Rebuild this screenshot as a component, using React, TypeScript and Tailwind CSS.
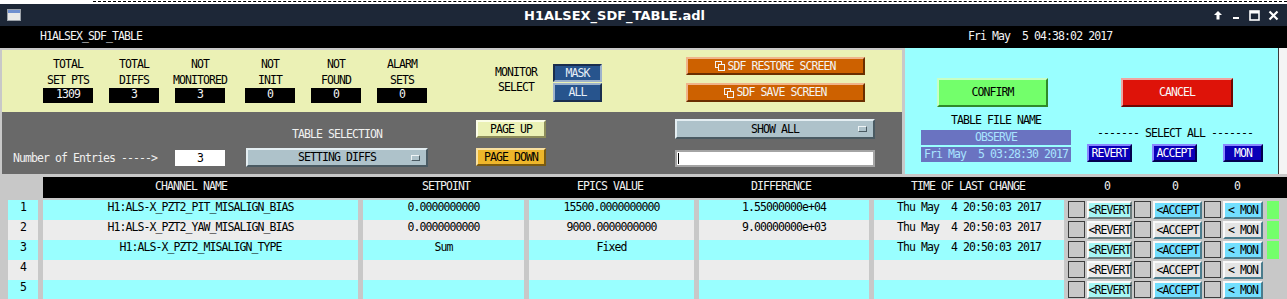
import React from 'react';

const rows = [
  { n: 1, ch: 'H1:ALS-X_PZT2_PIT_MISALIGN_BIAS', sp: '0.0000000000', ep: '15500.0000000000', df: '1.55000000e+04', t: 'Thu May  4 20:50:03 2017', on: true },
  { n: 2, ch: 'H1:ALS-X_PZT2_YAW_MISALIGN_BIAS', sp: '0.0000000000', ep: '9000.0000000000', df: '9.00000000e+03', t: 'Thu May  4 20:50:03 2017', on: true },
  { n: 3, ch: 'H1:ALS-X_PZT2_MISALIGN_TYPE', sp: 'Sum', ep: 'Fixed', df: '', t: 'Thu May  4 20:50:03 2017', on: true },
  { n: 4, ch: '', sp: '', ep: '', df: '', t: '', on: false },
  { n: 5, ch: '', sp: '', ep: '', df: '', t: '', on: false },
];

const stats = [
  { a: 'TOTAL', b: 'SET PTS', v: '1309' },
  { a: 'TOTAL', b: 'DIFFS', v: '3' },
  { a: 'NOT', b: 'MONITORED', v: '3' },
  { a: 'NOT', b: 'INIT', v: '0' },
  { a: 'NOT', b: 'FOUND', v: '0' },
  { a: 'ALARM', b: 'SETS', v: '0' },
];

// related-display glyph used on the SDF buttons
const RelIcon = () => (
  <svg width="11" height="10" viewBox="0 0 11 10" className="mr-[1px]">
    <rect x="0.5" y="0.5" width="6" height="6" fill="none" stroke="#f4f4f4" />
    <rect x="3.5" y="3.5" width="6" height="6" fill="#cd6100" stroke="#f4f4f4" />
  </svg>
);

const MenuMark = () => (
  <div className="absolute right-[6px] top-1/2 -translate-y-1/2 w-[9px] h-[6px] bg-[#aec2ca] border border-t-[#eef4f6] border-l-[#eef4f6] border-b-[#4a5a62] border-r-[#4a5a62]" />
);

export default function App() {
  return (
    <div className="w-[1287px] h-[299px] overflow-hidden bg-[#c8c8c8] font-['DejaVu_Sans_Mono',monospace] text-[11.5px] tracking-[-0.92px] leading-[13px] text-black">
      {/* desktop strip */}
      <div className="h-[4px] bg-white">
        <div className="ml-[93px] pt-[1px]">
          <div className="border-t border-dashed border-black" />
        </div>
      </div>

      {/* title bar */}
      <div className="h-[22px] bg-[#1d2737] flex items-center">
        <div className="ml-[7px] w-[14px] h-[12px] border border-[#9aa0a8] bg-[#e8e8e8] flex flex-col">
          <div className="h-[3px] bg-[#6f8fcf]" />
        </div>
        <div className="ml-[503px] font-['DejaVu_Sans',sans-serif] font-bold text-[13px] tracking-normal text-white">H1ALSEX_SDF_TABLE.adl</div>
        <div className="ml-auto mr-[8px] flex items-center gap-[8px]">
          <svg width="10" height="10" viewBox="0 0 10 10">
            <path d="M5 1 L1 5 H3.5 V9.5 H6.5 V5 H9 Z" fill="#fff" />
          </svg>
          <svg width="10" height="10" viewBox="0 0 10 10">
            <rect x="2" y="7" width="6" height="2" fill="#fff" />
          </svg>
          <svg width="11" height="11" viewBox="0 0 11 11">
            <rect x="1" y="1" width="9" height="9" fill="none" stroke="#fff" strokeWidth="1.6" />
            <rect x="1" y="1" width="9" height="2.5" fill="#fff" />
          </svg>
          <svg width="11" height="11" viewBox="0 0 11 11">
            <path d="M1.5 1.5 L9.5 9.5 M9.5 1.5 L1.5 9.5" stroke="#fff" strokeWidth="2.2" />
          </svg>
        </div>
      </div>

      {/* black header bar */}
      <div className="h-[22px] bg-black text-[#f4f4f4] flex items-start pt-[4px] whitespace-pre">
        <span className="ml-[40px]">H1ALSEX_SDF_TABLE</span>
        <span className="ml-[826px]">Fri May  5 04:38:02 2017</span>
      </div>

      {/* upper body */}
      <div className="flex h-[126px]">
        <div className="w-[905px] pt-[2px] pl-[2px] flex flex-col">
          {/* yellow summary panel */}
          <div className="w-[900px] h-[62px] bg-[#ebf1b5] flex items-start">
            <div className="flex ml-[41px] mt-[6px]">
              {stats.map((s, i) => (
                <div key={i} className={`w-[50px] flex flex-col items-center ${i === 0 ? '' : i === 3 ? 'ml-[20px]' : 'ml-[16px]'}`}>
                  <div className="leading-[16px] whitespace-nowrap">{s.a}</div>
                  <div className="leading-[16px] whitespace-nowrap">{s.b}</div>
                  <div className="w-[50px] h-[15px] bg-black text-[#f4f4f4] text-center">{s.v}</div>
                </div>
              ))}
            </div>
            <div className="ml-[59px] mt-[15px] w-[60px] flex flex-col items-center leading-[15px]">
              <div>MONITOR</div>
              <div>SELECT</div>
            </div>
            <div className="ml-[7px] mt-[14px] flex flex-col gap-[1px] text-[#e6eef6]">
              <div className="w-[49px] h-[18px] bg-[#27548d] border-2 border-t-[#1a2e4e] border-l-[#1a2e4e] border-b-[#9db2cc] border-r-[#9db2cc] flex items-center justify-center">MASK</div>
              <div className="w-[49px] h-[19px] bg-[#27548d] border-2 border-t-[#9db2cc] border-l-[#9db2cc] border-b-[#1a2e4e] border-r-[#1a2e4e] flex items-center justify-center">ALL</div>
            </div>
            <div className="ml-[84px] mt-[7px] flex flex-col gap-[8px] text-[#f4f4f4]">
              <div className="w-[179px] h-[18px] bg-[#cd6100] border-2 border-t-[#f0b48a] border-l-[#f0b48a] border-b-[#6a2e00] border-r-[#6a2e00] flex items-center justify-center">
                <RelIcon />SDF RESTORE SCREEN
              </div>
              <div className="w-[179px] h-[19px] bg-[#cd6100] border-2 border-t-[#f0b48a] border-l-[#f0b48a] border-b-[#6a2e00] border-r-[#6a2e00] flex items-center justify-center">
                <RelIcon />SDF SAVE SCREEN
              </div>
            </div>
          </div>

          {/* gray controls panel */}
          <div className="w-[900px] h-[62px] bg-[#696969] flex items-start">
            <div className="ml-[11px] mt-[38px] h-[16px] flex items-center text-[#f0f0f0]">
              <span>Number of Entries -----&gt;</span>
              <div className="ml-[18px] w-[50px] h-[16px] bg-white text-black flex items-center justify-center">3</div>
            </div>
            <div className="ml-[21px] mt-[15px] w-[182px] flex flex-col">
              <div className="text-center text-[#f0f0f0] leading-[14px]">TABLE SELECTION</div>
              <div className="relative mt-[7px] h-[19px] bg-[#aec2ca] border-2 border-t-[#e4eef2] border-l-[#e4eef2] border-b-[#4a5a62] border-r-[#4a5a62] flex items-center justify-center">
                SETTING DIFFS
                <MenuMark />
              </div>
            </div>
            <div className="ml-[48px] mt-[8px] flex flex-col gap-[10px]">
              <div className="w-[70px] h-[18px] bg-[#ebf1b5] border-2 border-t-[#fbfde8] border-l-[#fbfde8] border-b-[#8c8c5a] border-r-[#8c8c5a] flex items-center justify-center">PAGE UP</div>
              <div className="w-[70px] h-[18px] bg-[#eeb62b] border-2 border-t-[#f8e0a0] border-l-[#f8e0a0] border-b-[#7a5a10] border-r-[#7a5a10] flex items-center justify-center">PAGE DOWN</div>
            </div>
            <div className="ml-[129px] mt-[7px] flex flex-col gap-[11px]">
              <div className="relative w-[200px] h-[20px] bg-[#aec2ca] border-2 border-t-[#e4eef2] border-l-[#e4eef2] border-b-[#4a5a62] border-r-[#4a5a62] flex items-center justify-center">
                SHOW ALL
                <MenuMark />
              </div>
              <div className="w-[200px] h-[17px] bg-white border-2 border-[#a4a4a4] flex items-center">
                <div className="ml-[1px] w-[1px] h-[11px] bg-black" />
              </div>
            </div>
          </div>
        </div>

        {/* cyan confirm panel */}
        <div className="w-[373px] bg-[#99ffff] flex flex-col">
          <div className="mt-[30px] flex">
            <div className="ml-[32px] w-[111px] h-[29px] bg-[#73ff6b] border-2 border-t-[#c8ffc4] border-l-[#c8ffc4] border-b-[#2f8a2a] border-r-[#2f8a2a] flex items-center justify-center">CONFIRM</div>
            <div className="ml-[73px] w-[112px] h-[29px] bg-[#de1309] text-[#f8f8f8] border-2 border-t-[#f0a4a0] border-l-[#f0a4a0] border-b-[#6e0602] border-r-[#6e0602] flex items-center justify-center">CANCEL</div>
          </div>
          <div className="flex">
            <div className="ml-[16px] w-[150px] flex flex-col">
              <div className="mt-[6px] leading-[14px] text-center">TABLE FILE NAME</div>
              <div className="mt-[3px] h-[15px] bg-[#6a73c1] text-[#a8e4ff] text-center leading-[15px]">OBSERVE</div>
              <div className="mt-[2px] h-[15px] bg-[#6a73c1] text-[#a8e4ff] text-center leading-[15px] whitespace-pre">Fri May  5 03:28:30 2017</div>
            </div>
            <div className="ml-[16px] w-[176px] flex flex-col">
              <div className="mt-[19px] leading-[14px] text-center whitespace-pre">------- SELECT ALL -------</div>
              <div className="mt-[4px] flex text-white">
                <div className="w-[45px] h-[18px] bg-[#0a00b8] border-2 border-t-[#8a86ff] border-l-[#8a86ff] border-b-[#02004e] border-r-[#02004e] flex items-center justify-center">REVERT</div>
                <div className="ml-[20px] w-[45px] h-[18px] bg-[#0a00b8] border-2 border-t-[#8a86ff] border-l-[#8a86ff] border-b-[#02004e] border-r-[#02004e] flex items-center justify-center">ACCEPT</div>
                <div className="ml-[26px] w-[40px] h-[18px] bg-[#0a00b8] border-2 border-t-[#8a86ff] border-l-[#8a86ff] border-b-[#02004e] border-r-[#02004e] flex items-center justify-center">MON</div>
              </div>
            </div>
          </div>
        </div>
        <div className="w-[1px] bg-[#3a3a3a]" />
        <div className="flex-1 bg-[#f4f4f4]" />
      </div>

      <div className="h-[3px]" />

      {/* table header */}
      <div className="h-[21px] flex">
        <div className="w-[43px]" />
        <div className="flex-1 bg-black text-[#f0f0f0] flex items-start pt-[3px]">
          <div className="w-[315px] pr-[19px] text-center">CHANNEL NAME</div>
          <div className="ml-[5px] w-[161px] pl-[5px] text-center">SETPOINT</div>
          <div className="ml-[5px] w-[165px] pr-[3px] text-center">EPICS VALUE</div>
          <div className="ml-[5px] w-[170px] pr-[6px] text-center">DIFFERENCE</div>
          <div className="ml-[5px] w-[190px] pr-[2px] text-center">TIME OF LAST CHANGE</div>
          <div className="w-[86px] text-center">0</div>
          <div className="w-[50px] text-center">0</div>
          <div className="w-[74px] text-center">0</div>
        </div>
      </div>

      <div className="h-[2px]" />

      {/* table rows */}
      {rows.map((r) => {
        const odd = r.n % 2 === 1;
        const bg = odd ? 'bg-[#99ffff]' : 'bg-[#ececec]';
        const cell = `h-[20px] ${bg} flex justify-center items-start pt-[1px] whitespace-pre`;
        const revBg = odd ? 'bg-[#a6f6f4]' : 'bg-[#ececec]';
        const accBg = odd ? 'bg-[#73dfff]' : 'bg-[#e4e4e4]';
        return (
          <div key={r.n} className="h-[20px] flex">
            <div className={`ml-[8px] w-[30px] ${cell}`}>{r.n}</div>
            <div className={`ml-[5px] w-[315px] ${cell}`}>{r.ch}</div>
            <div className={`ml-[5px] w-[161px] ${cell}`}>{r.sp}</div>
            <div className={`ml-[5px] w-[165px] ${cell}`}>{r.ep}</div>
            <div className={`ml-[5px] w-[170px] ${cell}`}>{r.df}</div>
            <div className={`ml-[5px] w-[190px] ${cell}`}>{r.t}</div>
            <div className="flex items-start pt-[1px]">
              <div className="ml-[4px] w-[17px] h-[17px] bg-[#c8c8c8] border border-[#3c3c3c]" />
              <div className={`ml-[2px] w-[45px] h-[18px] ${revBg} border-2 border-t-[#fafafa] border-l-[#fafafa] border-b-[#6c7c7c] border-r-[#6c7c7c] flex items-center justify-center`}>&lt;REVERT</div>
              <div className="ml-[2px] w-[17px] h-[17px] bg-[#c8c8c8] border border-[#3c3c3c]" />
              <div className={`ml-[2px] w-[49px] h-[18px] ${accBg} border-2 border-t-[#fafafa] border-l-[#fafafa] border-b-[#4a7c8c] border-r-[#4a7c8c] flex items-center justify-center`}>&lt;ACCEPT</div>
              <div className="ml-[2px] w-[17px] h-[17px] bg-[#c8c8c8] border border-[#3c3c3c]" />
              <div className={`ml-[2px] w-[40px] h-[18px] ${accBg} border-2 border-t-[#fafafa] border-l-[#fafafa] border-b-[#4a7c8c] border-r-[#4a7c8c] flex items-center justify-center whitespace-pre`}>&lt; MON</div>
              {r.on && <div className="ml-[4px] w-[12px] h-[18px] bg-[#73ff6b]" />}
            </div>
          </div>
        );
      })}
    </div>
  );
}
